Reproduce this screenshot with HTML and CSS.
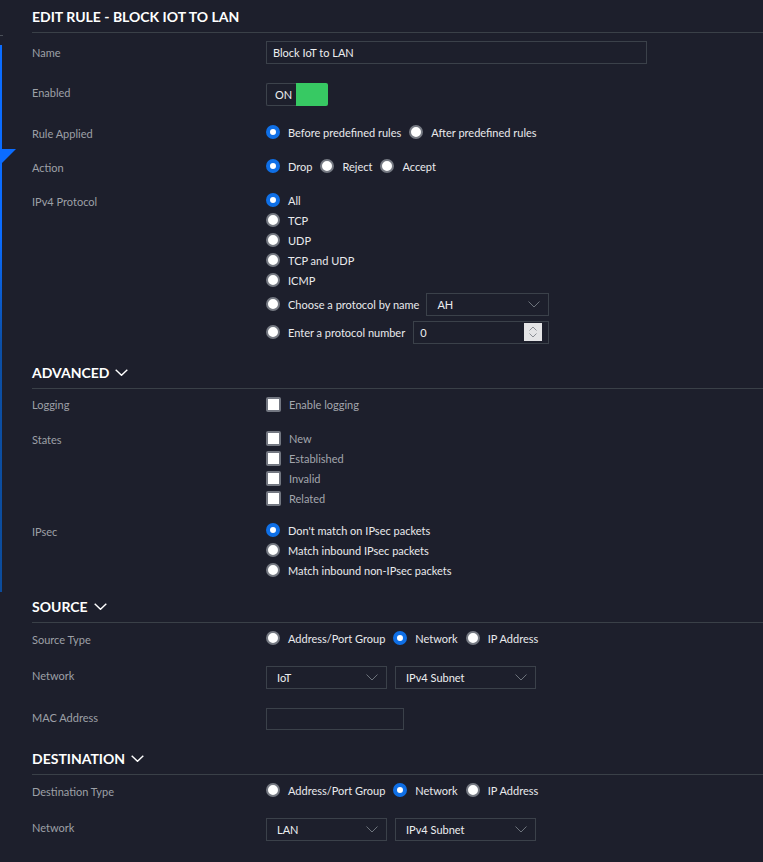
FILE: index.html
```html
<!DOCTYPE html>
<html lang="en">
<head>
    <meta charset="UTF-8">
    <meta name="viewport" content="width=device-width, initial-scale=1.0">
    <title>Edit Rule - Block IoT to LAN</title>

    <link rel="stylesheet" href="styles.css">
</head>
<body>

<div class="edge-cap"></div>
<div class="edge"></div>
<svg class="edge-tip" width="16" height="15" viewBox="0 0 16 15"><polygon points="0,0 16,0 2,14 0,14" fill="#0b6cff"/></svg>

<form class="rule">
    <h2 class="section-title">EDIT RULE - BLOCK IOT TO LAN</h2>

    <div class="row row-first">
        <span class="label">Name</span>
        <input type="text" class="text-input name-input" value="Block IoT to LAN">
    </div>

    <div class="row row-toggle">
        <span class="label flush">Enabled</span>
        <div class="toggle">
            <span class="toggle-text">ON</span>
            <span class="toggle-on"></span>
        </div>
    </div>

    <div class="row row-mid">
        <span class="label">Rule Applied</span>
        <div class="opts-inline">
            <label class="opt"><input type="radio" class="radio" name="applied" checked>Before predefined rules</label>
            <label class="opt"><input type="radio" class="radio" name="applied">After predefined rules</label>
        </div>
    </div>

    <div class="row">
        <span class="label">Action</span>
        <div class="opts-inline">
            <label class="opt"><input type="radio" class="radio" name="action" checked>Drop</label>
            <label class="opt"><input type="radio" class="radio" name="action">Reject</label>
            <label class="opt"><input type="radio" class="radio" name="action">Accept</label>
        </div>
    </div>

    <div class="row">
        <span class="label">IPv4 Protocol</span>
        <div class="opts-stack">
            <label class="opt"><input type="radio" class="radio" name="proto" checked>All</label>
            <label class="opt"><input type="radio" class="radio" name="proto">TCP</label>
            <label class="opt"><input type="radio" class="radio" name="proto">UDP</label>
            <label class="opt"><input type="radio" class="radio" name="proto">TCP and UDP</label>
            <label class="opt"><input type="radio" class="radio" name="proto">ICMP</label>
            <div class="opt opt-field">
                <input type="radio" class="radio" name="proto">Choose a protocol by name
                <div class="select select-proto">
                    <span>AH</span>
                    <svg width="12" height="7" viewBox="0 0 12 7"><polyline points="0.5,0.5 6,6 11.5,0.5" fill="none" stroke="#6d737c" stroke-width="1"/></svg>
                </div>
            </div>
            <div class="opt opt-field">
                <input type="radio" class="radio" name="proto">Enter a protocol number
                <div class="num">
                    <span class="num-value">0</span>
                    <span class="spin">
                        <svg width="8" height="5" viewBox="0 0 8 5"><polyline points="0.5,4.5 4,1 7.5,4.5" fill="none" stroke="#8b8e95" stroke-width="1"/></svg>
                        <svg width="8" height="5" viewBox="0 0 8 5"><polyline points="0.5,0.5 4,4 7.5,0.5" fill="none" stroke="#8b8e95" stroke-width="1"/></svg>
                    </span>
                </div>
            </div>
        </div>
    </div>

    <h2 class="section-title section-next">ADVANCED
        <svg width="13" height="7" viewBox="0 0 13 7"><polyline points="0.7,0.7 6.5,6.3 12.3,0.7" fill="none" stroke="#fff" stroke-width="1.4"/></svg>
    </h2>

    <div class="row row-after-title">
        <span class="label nudge">Logging</span>
        <label class="opt check-label"><input type="checkbox" class="check">Enable logging</label>
    </div>

    <div class="row">
        <span class="label">States</span>
        <div class="opts-stack">
            <label class="opt check-label"><input type="checkbox" class="check">New</label>
            <label class="opt check-label"><input type="checkbox" class="check">Established</label>
            <label class="opt check-label"><input type="checkbox" class="check">Invalid</label>
            <label class="opt check-label"><input type="checkbox" class="check">Related</label>
        </div>
    </div>

    <div class="row row-snug">
        <span class="label">IPsec</span>
        <div class="opts-stack">
            <label class="opt"><input type="radio" class="radio" name="ipsec" checked>Don't match on IPsec packets</label>
            <label class="opt"><input type="radio" class="radio" name="ipsec">Match inbound IPsec packets</label>
            <label class="opt"><input type="radio" class="radio" name="ipsec">Match inbound non-IPsec packets</label>
        </div>
    </div>

    <h2 class="section-title section-next section-short">SOURCE
        <svg width="13" height="7" viewBox="0 0 13 7"><polyline points="0.7,0.7 6.5,6.3 12.3,0.7" fill="none" stroke="#fff" stroke-width="1.4"/></svg>
    </h2>

    <div class="row row-after-title">
        <span class="label">Source Type</span>
        <div class="opts-inline">
            <label class="opt"><input type="radio" class="radio" name="src">Address/Port Group</label>
            <label class="opt"><input type="radio" class="radio" name="src" checked>Network</label>
            <label class="opt"><input type="radio" class="radio" name="src">IP Address</label>
        </div>
    </div>

    <div class="row row-loose">
        <span class="label flush">Network</span>
        <div class="selects">
            <div class="select select-net">
                <span>IoT</span>
                <svg width="12" height="7" viewBox="0 0 12 7"><polyline points="0.5,0.5 6,6 11.5,0.5" fill="none" stroke="#6d737c" stroke-width="1"/></svg>
            </div>
            <div class="select select-type">
                <span>IPv4 Subnet</span>
                <svg width="12" height="7" viewBox="0 0 12 7"><polyline points="0.5,0.5 6,6 11.5,0.5" fill="none" stroke="#6d737c" stroke-width="1"/></svg>
            </div>
        </div>
    </div>

    <div class="row row-toggle">
        <span class="label flush">MAC Address</span>
        <input type="text" class="text-input mac-input" value="">
    </div>

    <h2 class="section-title section-next">DESTINATION
        <svg width="13" height="7" viewBox="0 0 13 7"><polyline points="0.7,0.7 6.5,6.3 12.3,0.7" fill="none" stroke="#fff" stroke-width="1.4"/></svg>
    </h2>

    <div class="row row-after-title">
        <span class="label">Destination Type</span>
        <div class="opts-inline">
            <label class="opt"><input type="radio" class="radio" name="dst">Address/Port Group</label>
            <label class="opt"><input type="radio" class="radio" name="dst" checked>Network</label>
            <label class="opt"><input type="radio" class="radio" name="dst">IP Address</label>
        </div>
    </div>

    <div class="row row-loose">
        <span class="label flush">Network</span>
        <div class="selects">
            <div class="select select-net">
                <span>LAN</span>
                <svg width="12" height="7" viewBox="0 0 12 7"><polyline points="0.5,0.5 6,6 11.5,0.5" fill="none" stroke="#6d737c" stroke-width="1"/></svg>
            </div>
            <div class="select select-type">
                <span>IPv4 Subnet</span>
                <svg width="12" height="7" viewBox="0 0 12 7"><polyline points="0.5,0.5 6,6 11.5,0.5" fill="none" stroke="#6d737c" stroke-width="1"/></svg>
            </div>
        </div>
    </div>
</form>

</body>
</html>
```

FILE: styles.css
```css
* {
    box-sizing: border-box;
}

body {
    margin: 0;
    padding: 0;
    background-color: #1d1f2c;
    color: #e9eaec;
    font-family: Lato, 'Open Sans', sans-serif;
    font-size: 11px;
}

/* side panel edge, peeking in from the left */
.edge-cap {
    position: absolute;
    left: 0;
    top: 35px;
    width: 3px;
    height: 1px;
    background-color: #4a4f58;
}
.edge {
    position: absolute;
    left: 0;
    top: 45px;
    width: 2px;
    height: 547px;
    background: linear-gradient(#0b6cff, #0b6cff 35%, #0c4fa6 55%, #0c4c9c);
}
.edge-tip {
    position: absolute;
    left: 0;
    top: 149px;
}

.rule {
    padding-left: 32px;
    padding-bottom: 20px;
}

.section-title {
    display: flex;
    align-items: center;
    gap: 6px;
    height: 33px;
    margin: 0;
    border-bottom: 1px solid #3a4048;
    color: #fff;
    font-size: 14px;
    font-weight: 700;
}
.section-next {
    margin-top: 12px;
}
.section-short {
    margin-top: 10px;
}

.row {
    display: flex;
    align-items: flex-start;
    margin-top: 14px;
}
.row-first { margin-top: 8px; }
.row-toggle { margin-top: 19px; }
.row-mid { margin-top: 16px; }
.row-snug { margin-top: 12px; }
.row-after-title { margin-top: 5px; }
.row-loose { margin-top: 18px; }

/* labels sit a touch lower than the controls, without growing the row */
.label {
    flex-shrink: 0;
    width: 234px;
    padding-top: 2px;
    margin-bottom: -2px;
    line-height: 20px;
    color: #9da0a7;
}
.label.flush { padding-top: 0; margin-bottom: 0; }
.label.nudge { padding-top: 1px; margin-bottom: -1px; }

/* radios + checkboxes */
.opts-inline {
    display: flex;
}
.opts-inline .opt {
    margin-right: 8px;
}
.opts-stack {
    display: flex;
    flex-direction: column;
}
.opt {
    display: flex;
    align-items: center;
    height: 20px;
    white-space: nowrap;
}
.opt-field {
    height: 24px;
    margin-top: 2px;
}
.opt-field + .opt-field {
    margin-top: 4px;
}

.radio {
    appearance: none;
    flex-shrink: 0;
    width: 14px;
    height: 14px;
    margin: 0 8px 0 0;
    border: 2px solid #767a83;
    border-radius: 50%;
    background-color: #fff;
}
.radio:checked {
    border: 4px solid #0f6fe6;
}

.check {
    appearance: none;
    flex-shrink: 0;
    width: 15px;
    height: 15px;
    margin: 0 8px 0 0;
    border: 2px solid #737781;
    border-radius: 2px;
    background-color: #fff;
}
.check-label {
    color: #a3a6ad;
}

/* fields */
.text-input {
    height: 23px;
    padding: 0 6px;
    border: 1px solid #3b414a;
    border-radius: 0;
    background: transparent;
    color: #eceef0;
    font: inherit;
    outline: none;
}
.name-input { width: 381px; }
.mac-input { width: 138px; height: 22px; }

.toggle {
    display: flex;
    width: 62px;
    height: 23px;
}
.toggle-text {
    display: flex;
    align-items: center;
    width: 30px;
    padding-left: 8px;
    border: 1px solid #3d434c;
    border-right: 0;
    border-radius: 2px 0 0 2px;
    color: #eceef0;
}
.toggle-on {
    flex: 1;
    border-radius: 0 2px 2px 0;
    background-color: #37c963;
}

.selects {
    display: flex;
    gap: 8px;
}
.select {
    display: flex;
    align-items: center;
    justify-content: space-between;
    height: 23px;
    padding: 0 8px 0 10px;
    border: 1px solid #3b414a;
    color: #eceef0;
}
.select-net { width: 121px; }
.select-type { width: 141px; }
.select-proto { width: 123px; margin-left: 7px; }

.num {
    display: flex;
    align-items: center;
    width: 136px;
    height: 23px;
    margin-left: 8px;
    padding: 0 6px 0 6px;
    border: 1px solid #3b414a;
    color: #eceef0;
}
.num-value {
    flex: 1;
}
.spin {
    display: flex;
    flex-direction: column;
    align-items: center;
    justify-content: center;
    gap: 2px;
    width: 18px;
    height: 18px;
    background-color: #e4e4e6;
}
```
